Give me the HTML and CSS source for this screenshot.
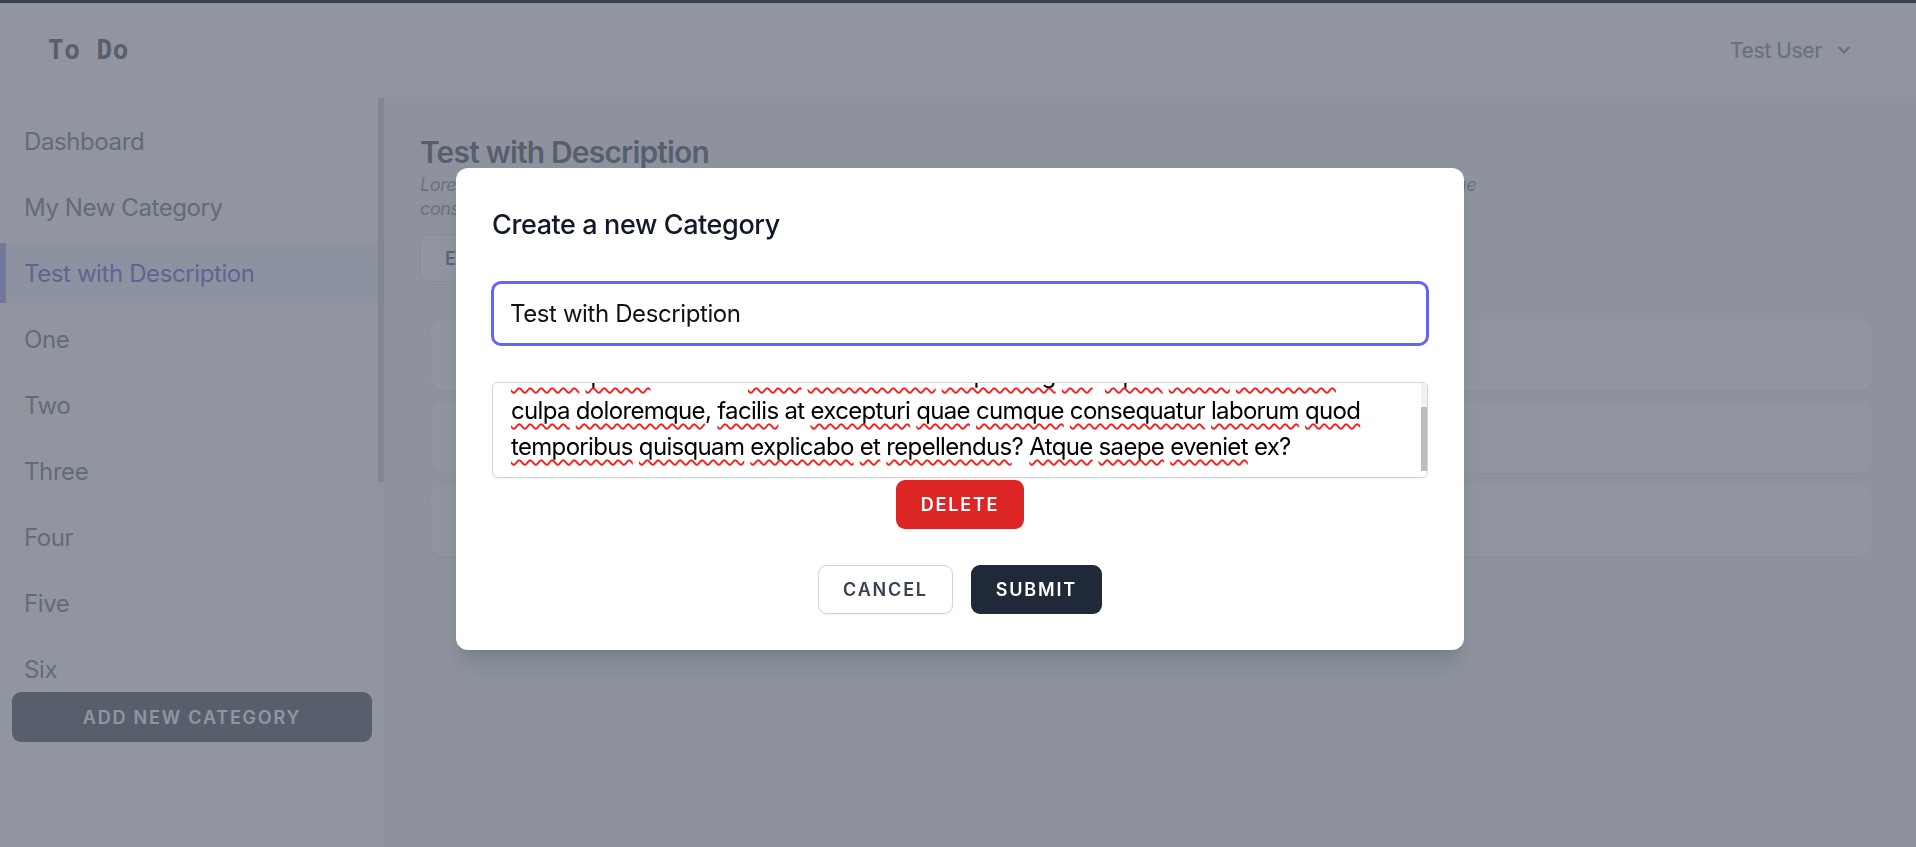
FILE: index.html
```html
<!DOCTYPE html>
<html lang="en">
<head>
<meta charset="utf-8">
<title>To Do</title>
<link rel="stylesheet" href="styles.css">
</head>
<body>
<div class="topbar"></div>
<header class="header">
  <div class="brand">To Do</div>
  <div class="user">
    <span>Test User</span>
    <svg viewBox="0 0 20 20" aria-hidden="true"><path fill-rule="evenodd" d="M5.293 7.293a1 1 0 011.414 0L10 10.586l3.293-3.293a1 1 0 111.414 1.414l-4 4a1 1 0 01-1.414 0l-4-4a1 1 0 010-1.414z" clip-rule="evenodd"/></svg>
  </div>
</header>
<div class="layout">
  <aside class="sidebar">
    <div class="side-scroll">
      <nav class="side-list">
        <a class="side-link">Dashboard</a>
        <a class="side-link">My New Category</a>
        <a class="side-link active">Test with Description</a>
        <a class="side-link">One</a>
        <a class="side-link">Two</a>
        <a class="side-link">Three</a>
        <a class="side-link">Four</a>
        <a class="side-link">Five</a>
        <a class="side-link">Six</a>
      </nav>
      <div class="side-track"><div class="side-thumb"></div></div>
    </div>
    <div class="side-foot">
      <button class="btn-add">Add new category</button>
    </div>
  </aside>
  <main class="main">
    <h1 class="title">Test with Description</h1>
    <p class="desc">Lorem ipsum dolor sit amet consectetur adipisicing elit. Optio totam doloribus culpa doloremque, facilis at excepturi quae cumque<br>consequatur laborum quod temporibus quisquam explicabo et repellendus? Atque saepe eveniet ex?</p>
    <button class="btn-edit">Edit</button>
    <div class="cards">
      <div class="card"></div>
      <div class="card"></div>
      <div class="card"></div>
    </div>
  </main>
</div>

<div class="overlay">
  <div class="modal">
    <h2 class="modal-title">Create a new Category</h2>
    <input class="field-input" type="text" value="Test with Description">
    <div class="field-area">
      <div class="area-body">
        <div class="area-text"><span class="sp">Lorem</span> <span class="sp">ipsum</span> dolor sit <span class="sp">amet</span> <span class="sp">consectetur</span> <span class="sp">adipisicing</span> <span class="sp">elit</span>. <span class="sp">Optio</span> <span class="sp">totam</span> <span class="sp">doloribus</span><br><span class="sp">culpa</span> <span class="sp">doloremque</span>, <span class="sp">facilis</span> at <span class="sp">excepturi</span> <span class="sp">quae</span> <span class="sp">cumque</span> <span class="sp">consequatur</span> <span class="sp">laborum</span> <span class="sp">quod</span><br><span class="sp">temporibus</span> <span class="sp">quisquam</span> <span class="sp">explicabo</span> <span class="sp">et</span> <span class="sp">repellendus</span>? <span class="sp">Atque</span> <span class="sp">saepe</span> <span class="sp">eveniet</span> ex?</div>
      </div>
      <div class="area-bar">
        <div class="area-thumb"></div>
        <div class="area-end"></div>
      </div>
    </div>
    <div class="delete-row">
      <button class="btn btn-delete">Delete</button>
    </div>
    <div class="modal-foot">
      <button class="btn btn-cancel">Cancel</button>
      <button class="btn btn-submit">Submit</button>
    </div>
  </div>
</div>
</body>
</html>
```
FILE: styles.css
```css
* { box-sizing: border-box; }

html, body {
  margin: 0;
  height: 100%;
}

body {
  font-family: Inter, "Noto Sans", sans-serif;
  letter-spacing: -0.025em;
  background: #f3f4f6;
  color: #111827;
  overflow: hidden;
}

.topbar {
  height: 3px;
  background: #3c4150;
  position: relative;
  z-index: 60;
}

.header {
  height: 95px;
  background: #ffffff;
  border-bottom: 1px solid #eceef1;
  display: flex;
  align-items: center;
  justify-content: space-between;
  padding: 0 60px 0 48px;
}

.brand {
  font-family: "DejaVu Sans Mono", "Liberation Mono", monospace;
  font-weight: bold;
  font-size: 26px;
  letter-spacing: 0.02em;
  color: #1f2937;
}

.user {
  display: flex;
  align-items: center;
  gap: 10px;
  font-size: 21px;
  font-weight: 500;
  color: #6b7280;
}

.user svg {
  width: 24px;
  height: 24px;
  fill: #6b7280;
}

.layout {
  display: flex;
  height: 749px;
}

.sidebar {
  width: 384px;
  flex: none;
  background: #ffffff;
  display: flex;
  flex-direction: column;
}

.side-scroll {
  height: 582px;
  display: flex;
}

.side-list {
  flex: 1;
  overflow: hidden;
  padding-top: 13px;
  display: flex;
  flex-direction: column;
  gap: 6px;
}

.side-link {
  flex: none;
  height: 60px;
  display: flex;
  align-items: center;
  padding-left: 18px;
  border-left: 6px solid transparent;
  font-size: 24px;
  color: #4b5563;
}

.side-link.active {
  background: #eef2ff;
  border-left-color: #818cf8;
  color: #4338ca;
}

.side-track {
  width: 6px;
  background: #fafafa;
}

.side-thumb {
  height: 384px;
  background: #c1c1c1;
}

.side-foot {
  padding: 12px;
}

.btn-add {
  width: 100%;
  height: 50px;
  border: none;
  border-radius: 9px;
  background: #1f2937;
  color: #ffffff;
  font-family: inherit;
  font-size: 18px;
  font-weight: 600;
  letter-spacing: 0.1em;
  text-transform: uppercase;
}

.main {
  flex: 1;
  padding: 33px 44px 0 36px;
}

.title {
  margin: 0;
  font-size: 30px;
  line-height: 42px;
  font-weight: 600;
  letter-spacing: -0.028em;
  color: #1f2937;
}

.desc {
  margin: 0;
  font-size: 18px;
  line-height: 24px;
  font-style: italic;
  color: #6b7280;
}

.btn-edit {
  margin-top: 13px;
  height: 48px;
  padding: 0 24px;
  background: #ffffff;
  border: 1px solid #d1d5db;
  border-radius: 9px;
  font-family: inherit;
  font-size: 18px;
  font-weight: 600;
  letter-spacing: 0.1em;
  text-transform: uppercase;
  color: #374151;
}

.cards {
  margin: 37px 0 0 11px;
  display: flex;
  flex-direction: column;
  gap: 12px;
}

.card {
  height: 71px;
  background: #ffffff;
  border-radius: 12px;
  box-shadow: 0 1px 3px rgba(0, 0, 0, 0.08);
}

/* modal */
.overlay {
  position: fixed;
  inset: 0;
  z-index: 50;
  background: rgba(107, 114, 128, 0.75);
  display: flex;
  justify-content: center;
  align-items: flex-start;
  padding: 168px 0 0 4px;
}

.modal {
  width: 1008px;
  background: #ffffff;
  border-radius: 12px;
  padding: 36px;
  box-shadow: 0 20px 25px -5px rgba(0, 0, 0, 0.1), 0 8px 10px -6px rgba(0, 0, 0, 0.1);
}

.modal-title {
  margin: 0;
  font-size: 27px;
  line-height: 42px;
  font-weight: 500;
  color: #111827;
}

.field-input {
  display: block;
  width: 100%;
  height: 63px;
  margin-top: 36px;
  padding: 0 16px;
  border: 2px solid #6366f1;
  box-shadow: 0 0 0 1px #6366f1;
  border-radius: 9px;
  outline: none;
  font-family: inherit;
  letter-spacing: inherit;
  font-size: 24px;
  color: #111111;
  background: #ffffff;
}

.field-area {
  margin-top: 37px;
  height: 96px;
  border: 1px solid #d1d5db;
  border-radius: 6px;
  display: flex;
  overflow: hidden;
  box-shadow: 0 1px 2px rgba(0, 0, 0, 0.05);
}

.area-body {
  flex: 1;
  overflow: hidden;
}

.area-text {
  margin-top: -38px;
  padding: 12px 18px;
  font-size: 24px;
  line-height: 36px;
  letter-spacing: -0.028em;
  white-space: nowrap;
  color: #000000;
}

.sp {
  text-decoration: underline wavy #ff1a1a;
  text-decoration-thickness: 1.5px;
  text-underline-offset: 4px;
  text-decoration-skip-ink: none;
}

.area-bar {
  width: 6px;
  flex: none;
  background: #f1f1f1;
  display: flex;
  flex-direction: column;
  justify-content: flex-end;
}

.area-thumb {
  height: 64px;
  background: #bdbdbd;
}

.area-end {
  height: 6px;
  background: #ffffff;
}

.delete-row {
  margin-top: 2px;
  display: flex;
  justify-content: center;
}

.btn {
  height: 49px;
  padding: 0 24px;
  border-radius: 9px;
  border: 1px solid transparent;
  font-family: inherit;
  font-size: 18px;
  font-weight: 600;
  letter-spacing: 0.1em;
  text-transform: uppercase;
}

.btn-delete {
  background: #dc2626;
  color: #ffffff;
}

.modal-foot {
  margin-top: 36px;
  display: flex;
  justify-content: center;
  gap: 18px;
}

.btn-cancel {
  background: #ffffff;
  border-color: #d1d5db;
  color: #374151;
  box-shadow: 0 1px 2px rgba(0, 0, 0, 0.05);
}

.btn-submit {
  background: #1f2937;
  color: #ffffff;
}
```
